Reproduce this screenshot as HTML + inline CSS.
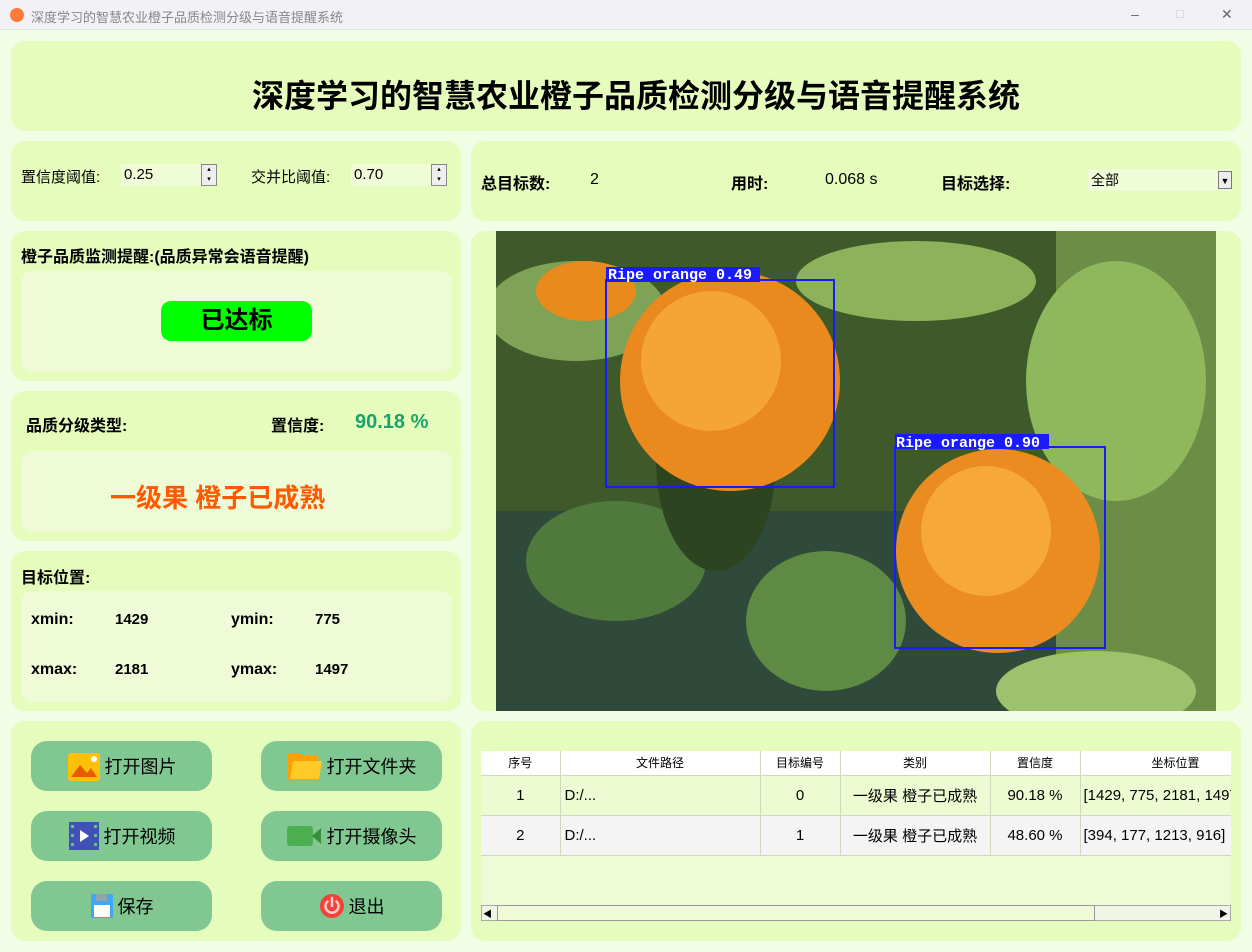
<!DOCTYPE html>
<html><head><meta charset="utf-8"><style>
*{margin:0;padding:0;box-sizing:border-box}
body{width:1252px;height:952px;overflow:hidden;background:#f2fde6;font-family:"Liberation Sans","Noto Sans CJK SC",sans-serif;position:relative;color:#000}
.a{position:absolute}
.p{position:absolute;background:#e6fcbc;border-radius:14px}
.in{position:absolute;background:#effbd6;border-radius:12px}
.b{font-weight:bold}
.btn{position:absolute;width:181px;height:50px;background:#80c792;border-radius:16px;display:flex;align-items:center;justify-content:center;font-size:18px;gap:4px}
.spin{position:absolute;width:80px;height:22px;background:#f0fbd8;font-size:15px;line-height:22px;padding-left:3px}
.sb{position:absolute;right:-16px;top:0;width:16px;height:22px;border:1px solid #888;background:#eee;font-size:7px;text-align:center;line-height:10px}
table{border-collapse:collapse;font-size:15px}
td{border-right:1px solid #d0d8c0;border-bottom:1px solid #d0d8c0;text-align:center;height:40px}
tr.h td{height:24px;font-size:12px}
</style></head><body>
<div class="a" style="left:0;top:0;width:1252px;height:30px;background:#f1f1f6;border-bottom:1px solid #e0e0e0"></div>
<div class="a" style="left:10px;top:8px;width:14px;height:14px;border-radius:50%;background:#ff7a3d"></div>
<div class="a" style="left:31px;top:7px;font-size:13px;color:#888;white-space:nowrap">深度学习的智慧农业橙子品质检测分级与语音提醒系统</div>
<div class="a" style="left:1131px;top:6px;font-size:14px;color:#666">–</div>
<div class="a" style="left:1176px;top:6px;font-size:13px;color:#ccc">□</div>
<div class="a" style="left:1221px;top:6px;font-size:14px;color:#666">✕</div>

<div class="p" style="left:11px;top:41px;width:1230px;height:90px"></div>
<div class="a b" style="left:0;width:1272px;top:71px;text-align:center;font-size:32px;white-space:nowrap">深度学习的智慧农业橙子品质检测分级与语音提醒系统</div>

<div class="p" style="left:11px;top:141px;width:450px;height:80px"></div>
<div class="a" style="left:21px;top:166px;font-size:15px">置信度阈值:</div>
<div class="spin" style="left:121px;top:164px">0.25<div class="sb">▴<br>▾</div></div>
<div class="a" style="left:251px;top:166px;font-size:15px">交并比阈值:</div>
<div class="spin" style="left:351px;top:164px">0.70<div class="sb">▴<br>▾</div></div>

<div class="p" style="left:471px;top:141px;width:770px;height:80px"></div>
<div class="a b" style="left:481px;top:170px;font-size:16px">总目标数:</div>
<div class="a" style="left:590px;top:171px;font-size:16px">2</div>
<div class="a b" style="left:731px;top:170px;font-size:16px">用时:</div>
<div class="a" style="left:825px;top:171px;font-size:16px">0.068 s</div>
<div class="a b" style="left:941px;top:170px;font-size:16px">目标选择:</div>
<div class="a" style="left:1088px;top:169px;width:144px;height:22px;background:#f0fbd8;font-size:14px;line-height:22px;padding-left:3px">全部<div class="a" style="right:0;top:2px;width:14px;height:18px;border:1px solid #777;background:#eee;font-size:9px;text-align:center;line-height:18px">▼</div></div>

<div class="p" style="left:11px;top:231px;width:450px;height:150px"></div>
<div class="a b" style="left:21px;top:243px;font-size:16px">橙子品质监测提醒:(品质异常会语音提醒)</div>
<div class="in" style="left:21px;top:271px;width:431px;height:101px"></div>
<div class="a b" style="left:161px;top:301px;width:151px;height:40px;background:#00ff00;border-radius:10px;text-align:center;font-size:24px;line-height:40px">已达标</div>

<div class="p" style="left:11px;top:391px;width:450px;height:150px"></div>
<div class="a b" style="left:26px;top:412px;font-size:16px">品质分级类型:</div>
<div class="a b" style="left:271px;top:412px;font-size:16px">置信度:</div>
<div class="a b" style="left:355px;top:411px;font-size:20px;color:#1aa36b">90.18 %</div>
<div class="in" style="left:21px;top:451px;width:431px;height:81px"></div>
<div class="a b" style="left:110px;top:478px;font-size:26px;color:#ff5a00">一级果 橙子已成熟</div>

<div class="p" style="left:11px;top:551px;width:450px;height:160px"></div>
<div class="a b" style="left:21px;top:564px;font-size:16px">目标位置:</div>
<div class="in" style="left:21px;top:591px;width:431px;height:111px"></div>
<div class="a b" style="left:31px;top:611px;font-size:16px">xmin:</div>
<div class="a b" style="left:115px;top:611px;font-size:15px">1429</div>
<div class="a b" style="left:231px;top:611px;font-size:16px">ymin:</div>
<div class="a b" style="left:315px;top:611px;font-size:15px">775</div>
<div class="a b" style="left:31px;top:661px;font-size:16px">xmax:</div>
<div class="a b" style="left:115px;top:661px;font-size:15px">2181</div>
<div class="a b" style="left:231px;top:661px;font-size:16px">ymax:</div>
<div class="a b" style="left:315px;top:661px;font-size:15px">1497</div>

<div class="p" style="left:11px;top:721px;width:450px;height:220px"></div>
<div class="btn" style="left:31px;top:741px"><svg width="34" height="30"><rect x="1" y="2" width="32" height="28" rx="3" fill="#ffc107"/><path d="M4 26 L13 14 L20 22 L24 17 L30 26Z" fill="#e65c00"/><circle cx="27" cy="8" r="3" fill="#fff"/></svg>打开图片</div>
<div class="btn" style="left:261px;top:741px"><svg width="36" height="30"><path d="M1 2 H13 L16 5 H31 V28 H1Z" fill="#ffa000"/><path d="M6 10 H35 L32 28 H3Z" fill="#ffca28"/></svg>打开文件夹</div>
<div class="btn" style="left:31px;top:811px"><svg width="32" height="30"><rect x="1" y="1" width="30" height="28" fill="#3f51b5"/><path d="M12 9 L21 15 L12 21Z" fill="#fff"/><g fill="#6bc18c"><rect x="3" y="4" width="3" height="3"/><rect x="3" y="13" width="3" height="3"/><rect x="3" y="22" width="3" height="3"/><rect x="26" y="4" width="3" height="3"/><rect x="26" y="13" width="3" height="3"/><rect x="26" y="22" width="3" height="3"/></g></svg>打开视频</div>
<div class="btn" style="left:261px;top:811px"><svg width="36" height="24"><rect x="0" y="2" width="26" height="20" rx="3" fill="#4caf50"/><path d="M25 12 L34 4 V20Z" fill="#388e3c"/></svg>打开摄像头</div>
<div class="btn" style="left:31px;top:881px"><svg width="24" height="26"><rect x="1" y="1" width="22" height="24" rx="2" fill="#42a5f5"/><rect x="6" y="1" width="11" height="7" fill="#90a4ae"/><rect x="4" y="12" width="16" height="12" fill="#fff"/></svg>保存</div>
<div class="btn" style="left:261px;top:881px"><svg width="26" height="26"><circle cx="13" cy="13" r="12" fill="#f44336"/><path d="M8.5 8.5 A6.5 6.5 0 1 0 17.5 8.5 M13 5 V13" stroke="#ffcdd2" stroke-width="2.5" fill="none" stroke-linecap="round"/></svg>退出</div>

<div class="p" style="left:471px;top:231px;width:770px;height:480px"></div>
<svg class="a" style="left:496px;top:231px" width="720" height="480">
<rect width="720" height="480" fill="#3e5a2a"/>
<rect x="0" y="280" width="720" height="200" fill="#2f4a3a"/>
<rect x="560" y="0" width="160" height="480" fill="#6c8d45"/>
<ellipse cx="80" cy="80" rx="90" ry="50" fill="#7fa356"/>
<ellipse cx="420" cy="50" rx="120" ry="40" fill="#8db35a"/>
<ellipse cx="620" cy="150" rx="90" ry="120" fill="#8fb85c"/>
<ellipse cx="120" cy="330" rx="90" ry="60" fill="#4f7a3c"/>
<ellipse cx="330" cy="390" rx="80" ry="70" fill="#5f8a43"/>
<ellipse cx="600" cy="460" rx="100" ry="40" fill="#9cc26e"/>
<ellipse cx="220" cy="230" rx="60" ry="110" fill="#2c4420"/>
<ellipse cx="90" cy="60" rx="50" ry="30" fill="#e88a1c"/>
<circle cx="234" cy="150" r="110" fill="#e9891e"/>
<circle cx="215" cy="130" r="70" fill="#f5a533"/>
<circle cx="502" cy="320" r="102" fill="#ea8c20"/>
<circle cx="490" cy="300" r="65" fill="#f6a938"/>
<rect x="110" y="49" width="228" height="207" fill="none" stroke="#1a1aff" stroke-width="2"/>
<rect x="110" y="36" width="154" height="15" fill="#1a1aff"/>
<text x="112" y="48" font-family="Liberation Mono,monospace" font-size="15" font-weight="bold" fill="#fff">Ripe orange 0.49</text>
<rect x="399" y="216" width="210" height="201" fill="none" stroke="#1a1aff" stroke-width="2"/>
<rect x="399" y="203" width="154" height="15" fill="#1a1aff"/>
<text x="400" y="216" font-family="Liberation Mono,monospace" font-size="15" font-weight="bold" fill="#fff">Ripe orange 0.90</text>
</svg>

<div class="p" style="left:471px;top:721px;width:770px;height:220px"></div>
<div class="a" style="left:481px;top:751px;width:750px;height:154px;background:#effbd6;overflow:hidden">
<table style="width:790px;table-layout:fixed">
<colgroup><col style="width:79px"><col style="width:200px"><col style="width:80px"><col style="width:150px"><col style="width:90px"><col style="width:191px"></colgroup>
<tr class="h" style="background:#fff"><td>序号</td><td>文件路径</td><td>目标编号</td><td>类别</td><td>置信度</td><td>坐标位置</td></tr>
<tr style="background:#ecfbd2"><td>1</td><td style="text-align:left;padding-left:4px">D:/...</td><td>0</td><td>一级果 橙子已成熟</td><td>90.18 %</td><td style="text-align:left;padding-left:3px;white-space:nowrap">[1429, 775, 2181, 1497]</td></tr>
<tr style="background:#f4f4f4"><td>2</td><td style="text-align:left;padding-left:4px">D:/...</td><td>1</td><td>一级果 橙子已成熟</td><td>48.60 %</td><td style="text-align:left;padding-left:3px;white-space:nowrap">[394, 177, 1213, 916]</td></tr>
</table></div>
<div class="a" style="left:481px;top:905px;width:750px;height:16px;background:#f0f5e6;border:1px solid #aaa"></div>
<div class="a" style="left:497px;top:905px;width:598px;height:16px;background:#effbd6;border:1px solid #999"></div>
<div class="a" style="left:483px;top:907px;font-size:9px">◀</div>
<div class="a" style="left:1219px;top:907px;font-size:9px">▶</div>
</body></html>
